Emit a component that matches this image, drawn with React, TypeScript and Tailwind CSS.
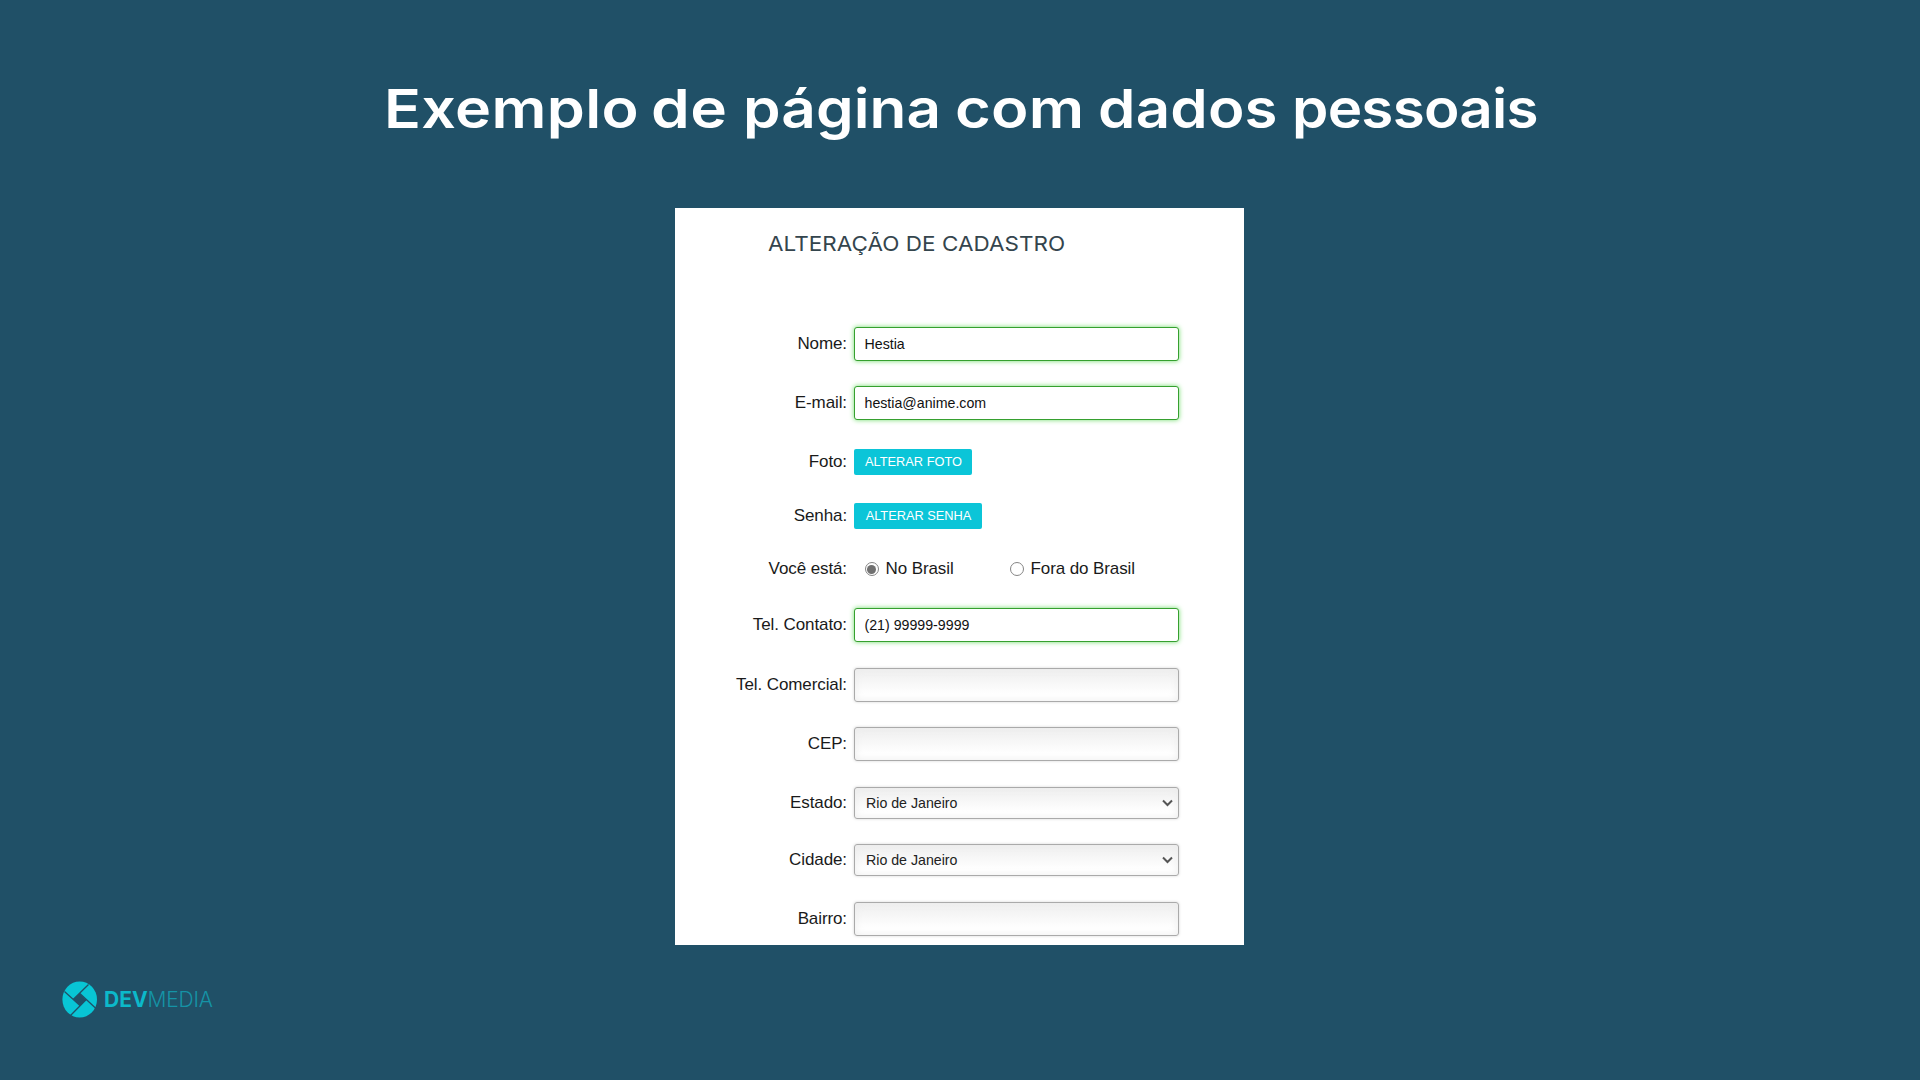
import type { ReactNode } from 'react';

const titleWords = [
  { text: 'Exemplo', className: 'w-[266.5px] scale-x-[1.13] tracking-[0.3px]' },
  { text: 'de', className: 'w-[92px] scale-x-[1.15] tracking-[0.5px]' },
  { text: 'página', className: 'w-[212px] scale-x-[1.115] tracking-[0.1px]' },
  { text: 'com', className: 'w-[143px] scale-x-[1.14] tracking-[0.2px]' },
  { text: 'dados', className: 'w-[194px] scale-x-[1.11] tracking-[0.2px]' },
  { text: 'pessoais', className: 'w-[245px] scale-x-[1.08] tracking-[-0.7px]' },
];

function Row({ label, className, children }: { label: string; className: string; children: ReactNode }) {
  return (
    <div className={`flex items-center ${className}`}>
      <span className="w-[172px] shrink-0 whitespace-nowrap text-right text-[17px] leading-5 tracking-[-0.1px] text-[#1a1a1a]">
        {label}
      </span>
      <div className="ml-[7px] flex h-full items-center">{children}</div>
    </div>
  );
}

function ValidField({ value }: { value: string }) {
  return (
    <div className="flex h-full w-[325px] items-center rounded-[3px] border border-[#36a02f] bg-white pl-[9.5px] text-[14.2px] leading-5 text-[#111] shadow-[0_0_5px_#6fdc6a]">
      {value}
    </div>
  );
}

const grayField =
  'flex h-full w-[325px] items-center justify-between rounded-[3px] border border-[#aaa] bg-linear-to-b from-[#eeeeee] to-white to-80% shadow-[inset_0_0_8px_#ededed,0_0_3px_#d4d4d4]';

function SelectField({ value }: { value: string }) {
  return (
    <div className={`${grayField} pl-[11px] pr-[5px] text-[14.2px] leading-5 text-[#222]`}>
      {value}
      <svg width="11" height="8" viewBox="0 0 11 8" fill="none" stroke="#555" strokeWidth="2">
        <path d="M1 1.5 5.5 6 10 1.5" />
      </svg>
    </div>
  );
}

function Button({ children, className }: { children: ReactNode; className: string }) {
  return (
    <button
      className={`flex h-full items-center justify-center whitespace-nowrap rounded-[2px] bg-[#0bc5d8] pl-px text-[12.8px] leading-5 text-white ${className}`}
    >
      {children}
    </button>
  );
}

function Radio({ checked }: { checked?: boolean }) {
  return (
    <span className="flex size-[14px] items-center justify-center rounded-full border border-[#858585] bg-white">
      {checked && <span className="size-[9px] rounded-full bg-[#707070]" />}
    </span>
  );
}

function Logo() {
  return (
    <div className="flex items-center font-['Inter',sans-serif] text-[21px] leading-6">
      <svg width="36" height="37" viewBox="0 0 36 37">
        <ellipse cx="17.7" cy="18.5" rx="17.3" ry="18" fill="#08c5d5" />
        <path d="M17.6 12.2 24 18.8 18.2 24.8 11.2 18.5Z" fill="#205067" />
        <path
          d="M2.5 10.5 18.2 24.8M11.2 18.5 26.5 3.5M17.6 12.2 34 27.5M24 18.8 8.5 34.5"
          stroke="#205067"
          strokeWidth="1.3"
          fill="none"
        />
      </svg>
      <span className="ml-[6px] pt-px font-bold text-[#0cb9ca]">DEV</span>
      <span className="pt-px font-light tracking-[-0.2px] text-[#1593a6]">MEDIA</span>
    </div>
  );
}

export default function App() {
  return (
    <main className="flex h-[1080px] w-[1920px] flex-col overflow-hidden bg-[#205067] font-['Liberation_Sans',sans-serif]">
      <h1 className="ml-[384px] mt-[76px] flex h-[66px] items-center font-['Inter',sans-serif] text-[54px] font-semibold leading-[66px] text-white">
        {titleWords.map((word) => (
          <span key={word.text} className={`shrink-0 origin-left whitespace-nowrap ${word.className}`}>
            {word.text}
          </span>
        ))}
      </h1>

      <section className="ml-[675px] mt-[66px] flex h-[737px] w-[569px] shrink-0 flex-col overflow-hidden bg-white">
        <h2 className="ml-[92.5px] mt-[24px] h-6 origin-left scale-x-[1.085] whitespace-nowrap font-['Inter',sans-serif] text-[20.7px] leading-6 tracking-[0.05px] text-[#34454d]">
          ALTERAÇÃO DE CADASTRO
        </h2>
        <Row label="Nome:" className="mt-[71px] h-[34px]">
          <ValidField value="Hestia" />
        </Row>
        <Row label="E-mail:" className="mt-[25px] h-[34px]">
          <ValidField value="hestia@anime.com" />
        </Row>
        <Row label="Foto:" className="mt-[29px] h-[26px]">
          <Button className="w-[118px]">ALTERAR FOTO</Button>
        </Row>
        <Row label="Senha:" className="mt-[28px] h-[26px]">
          <Button className="w-[128px]">ALTERAR SENHA</Button>
        </Row>
        <Row label="Você está:" className="mt-[29px] h-[22px]">
          <div className="ml-[10.5px] flex items-center text-[17px] leading-5 text-[#1a1a1a]">
            <Radio checked />
            <span className="ml-[7px] w-[124px] tracking-[-0.1px]">No Brasil</span>
            <Radio />
            <span className="ml-[7px] tracking-[-0.1px]">Fora do Brasil</span>
          </div>
        </Row>
        <Row label="Tel. Contato:" className="mt-[28px] h-[34px]">
          <ValidField value="(21) 99999-9999" />
        </Row>
        <Row label="Tel. Comercial:" className="mt-[26px] h-[34px]">
          <div className={grayField} />
        </Row>
        <Row label="CEP:" className="mt-[25px] h-[34px]">
          <div className={grayField} />
        </Row>
        <Row label="Estado:" className="mt-[26px] h-[32px]">
          <SelectField value="Rio de Janeiro" />
        </Row>
        <Row label="Cidade:" className="mt-[25px] h-[32px]">
          <SelectField value="Rio de Janeiro" />
        </Row>
        <Row label="Bairro:" className="mt-[26px] h-[34px]">
          <div className={grayField} />
        </Row>
      </section>

      <footer className="ml-[62px] mt-[36px]">
        <Logo />
      </footer>
    </main>
  );
}
